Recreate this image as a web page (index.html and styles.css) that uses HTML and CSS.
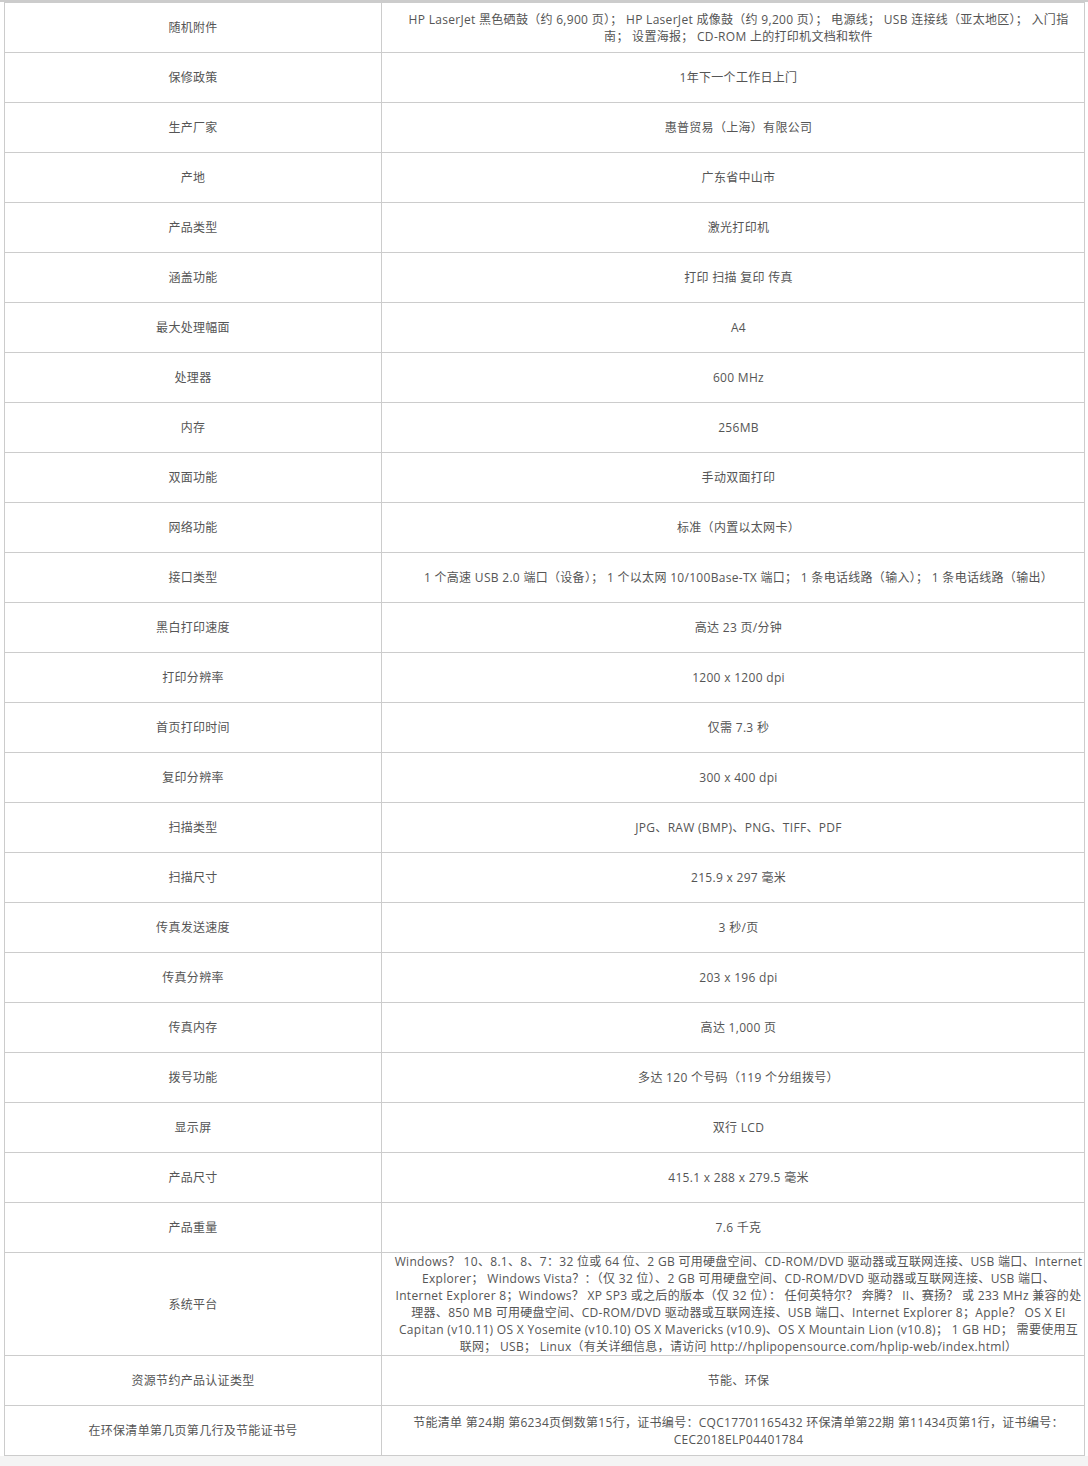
FILE: index.html
```html
<!DOCTYPE html>
<html lang="zh-CN">
<head>
<meta charset="utf-8">
<title>产品参数</title>
<link rel="stylesheet" href="styles.css">
</head>
<body>
<div class="wrap">
  <table class="spec">
    <colgroup><col class="c-name"><col class="c-val"></colgroup>
    <tbody>
      <tr><td>随机附件</td><td>HP LaserJet 黑色硒鼓（约 6,900 页）； HP LaserJet 成像鼓（约 9,200 页）； 电源线； USB 连接线（亚太地区）； 入门指<br>南； 设置海报； CD-ROM 上的打印机文档和软件</td></tr>
      <tr><td>保修政策</td><td>1年下一个工作日上门</td></tr>
      <tr><td>生产厂家</td><td>惠普贸易（上海）有限公司</td></tr>
      <tr><td>产地</td><td>广东省中山市</td></tr>
      <tr><td>产品类型</td><td>激光打印机</td></tr>
      <tr><td>涵盖功能</td><td>打印 扫描 复印 传真</td></tr>
      <tr><td>最大处理幅面</td><td>A4</td></tr>
      <tr><td>处理器</td><td>600 MHz</td></tr>
      <tr><td>内存</td><td>256MB</td></tr>
      <tr><td>双面功能</td><td>手动双面打印</td></tr>
      <tr><td>网络功能</td><td>标准（内置以太网卡）</td></tr>
      <tr><td>接口类型</td><td>1 个高速 USB 2.0 端口（设备）； 1 个以太网 10/100Base-TX 端口； 1 条电话线路（输入）； 1 条电话线路（输出）</td></tr>
      <tr><td>黑白打印速度</td><td>高达 23 页/分钟</td></tr>
      <tr><td>打印分辨率</td><td>1200 x 1200 dpi</td></tr>
      <tr><td>首页打印时间</td><td>仅需 7.3 秒</td></tr>
      <tr><td>复印分辨率</td><td>300 x 400 dpi</td></tr>
      <tr><td>扫描类型</td><td>JPG、RAW (BMP)、PNG、TIFF、PDF</td></tr>
      <tr><td>扫描尺寸</td><td>215.9 x 297 毫米</td></tr>
      <tr><td>传真发送速度</td><td>3 秒/页</td></tr>
      <tr><td>传真分辨率</td><td>203 x 196 dpi</td></tr>
      <tr><td>传真内存</td><td>高达 1,000 页</td></tr>
      <tr><td>拨号功能</td><td>多达 120 个号码（119 个分组拨号）</td></tr>
      <tr><td>显示屏</td><td>双行 LCD</td></tr>
      <tr><td>产品尺寸</td><td>415.1 x 288 x 279.5 毫米</td></tr>
      <tr><td>产品重量</td><td>7.6 千克</td></tr>
      <tr><td>系统平台</td><td class="long">Windows？ 10、8.1、8、7：32 位或 64 位、2 GB 可用硬盘空间、CD-ROM/DVD 驱动器或互联网连接、USB 端口、Internet<br>Explorer； Windows Vista？：（仅 32 位）、2 GB 可用硬盘空间、CD-ROM/DVD 驱动器或互联网连接、USB 端口、<br>Internet Explorer 8；Windows？ XP SP3 或之后的版本（仅 32 位）： 任何英特尔？ 奔腾？ II、赛扬？ 或 233 MHz 兼容的处<br>理器、850 MB 可用硬盘空间、CD-ROM/DVD 驱动器或互联网连接、USB 端口、Internet Explorer 8；Apple？ OS X EI<br>Capitan (v10.11) OS X Yosemite (v10.10) OS X Mavericks (v10.9)、OS X Mountain Lion (v10.8)； 1 GB HD； 需要使用互<br>联网； USB； Linux（有关详细信息，请访问 http://hplipopensource.com/hplip-web/index.html）</td></tr>
      <tr><td>资源节约产品认证类型</td><td>节能、环保</td></tr>
      <tr><td>在环保清单第几页第几行及节能证书号</td><td>节能清单 第24期 第6234页倒数第15行，证书编号：CQC17701165432 环保清单第22期 第11434页第1行，证书编号：<br>CEC2018ELP04401784</td></tr>
    </tbody>
  </table>
</div>
</body>
</html>
```

FILE: styles.css
```css
html {
  background: #f4f4f4;
}
body {
  margin: 0;
  background: #f4f4f4;
}
.wrap {
  background: #ffffff;
  border-top: 2px solid #cccccc;
  padding: 0 4px 0 4px;
}
.spec {
  width: 1080px;
  table-layout: fixed;
  border-collapse: collapse;
  border: 1px solid #cccccc;
  font-family: "Open Sans", "Noto Sans CJK SC", sans-serif;
  font-size: 12px;
  line-height: 17px;
  letter-spacing: 0.3px;
  color: #555555;
}
.c-name {
  width: 377px;
}
.c-val {
  width: 703px;
}
.spec td {
  height: 49px;
  padding: 0 1px;
  border: 1px solid #cccccc;
  text-align: center;
  vertical-align: middle;
}
.spec td:last-child {
  padding: 0 0 0 11px;
}
.spec td.long {
  white-space: nowrap;
}
```
